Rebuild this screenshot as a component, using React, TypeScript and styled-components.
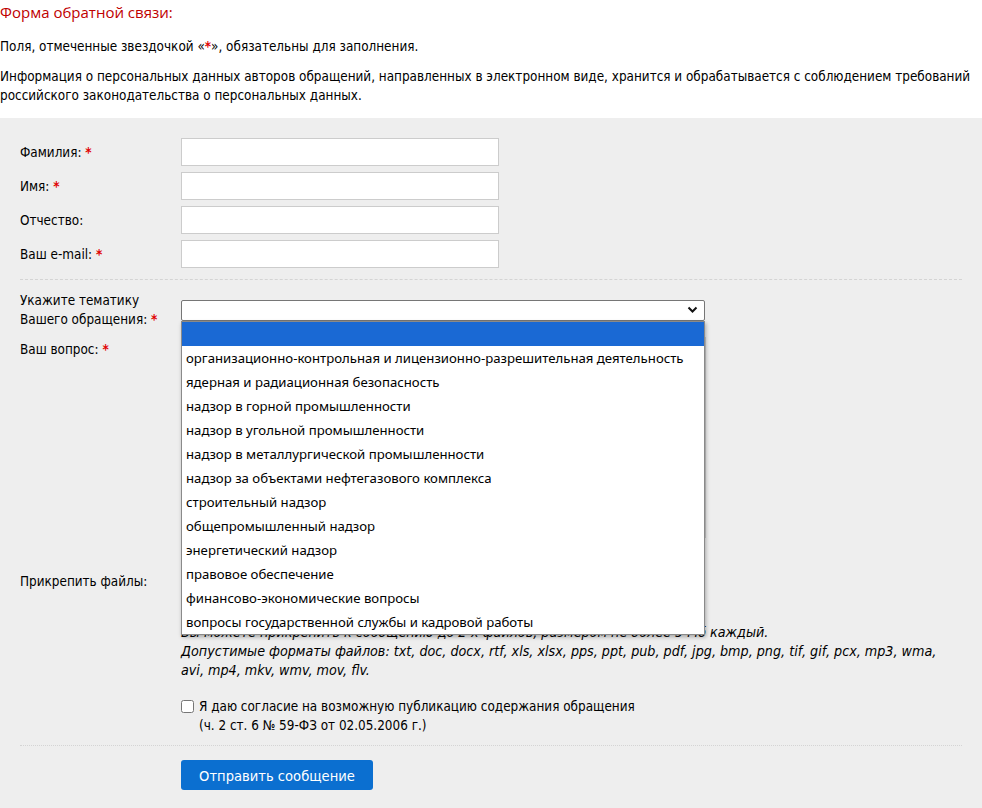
import React from "react";
import styled, { createGlobalStyle } from "styled-components";

const Global = createGlobalStyle`
  html, body { margin: 0; padding: 0; background: #ffffff; }
  body { font-family: "DejaVu Sans Condensed", "DejaVu Sans", sans-serif; color: #000; }
  * { box-sizing: border-box; }
`;

const Page = styled.div`
  width: 982px;
  font-size: 13.4px;
  line-height: 19px;
`;

const Title = styled.h2`
  margin: 0;
  font-family: "Open Sans", "Liberation Sans", sans-serif;
  font-size: 15px;
  line-height: 24px;
  font-weight: normal;
  color: #c00000;
`;

const Para = styled.p<{ $top: number }>`
  margin: ${(p) => p.$top}px 0 0;
`;

const Star = styled.span`
  color: #e00000;
  font-weight: bold;
`;

const Panel = styled.div`
  margin-top: 13px;
  background: #eeeeee;
  padding: 20px 20px 24px 20px;
  display: flex;
  flex-direction: column;
`;

const Row = styled.div<{ $align?: string; $mt?: number }>`
  display: grid;
  grid-template-columns: 161px 1fr;
  align-items: ${(p) => p.$align || "center"};
  margin-top: ${(p) => p.$mt ?? 0}px;
`;

const Label = styled.label<{ $pt?: number }>`
  padding-top: ${(p) => p.$pt ?? 0}px;
`;

const TextInput = styled.input`
  display: block;
  width: 318px;
  height: 28px;
  border: 1px solid #cccccc;
  background: #ffffff;
  margin: 0;
  padding: 0 6px;
  font: inherit;
`;

const Separator = styled.hr<{ $style?: string; $mt: number; $mb: number }>`
  margin: ${(p) => p.$mt}px 0 ${(p) => p.$mb}px;
  border: 0;
  border-top: 1px ${(p) => p.$style || "dashed"} #d4d4d4;
  height: 0;
`;

const SelectWrap = styled.div`
  position: relative;
  width: 524px;
  height: 21px;
`;

const SelectBox = styled.div`
  width: 524px;
  height: 21px;
  background: #ffffff;
  border: 1px solid #767676;
  border-radius: 2px;
`;

const Chevron = styled.svg`
  position: absolute;
  right: 7px;
  top: 6px;
`;

const DropList = styled.ul`
  position: absolute;
  left: 0;
  top: 21px;
  width: 524px;
  margin: 0;
  padding: 0;
  list-style: none;
  background: #ffffff;
  border: 1px solid #8a8a8a;
  box-shadow: 1px 2px 4px rgba(0, 0, 0, 0.3);
  z-index: 5;
  font-family: "Noto Sans", "Open Sans", sans-serif;
  font-weight: normal;
  font-size: 13.2px;
  color: #000;
`;

const Option = styled.li<{ $active?: boolean }>`
  height: 24px;
  line-height: 24px;
  padding-left: 4px;
  white-space: nowrap;
  background: ${(p) => (p.$active ? "#1a69d4" : "transparent")};
  color: ${(p) => (p.$active ? "#fff" : "#000")};
`;

const TextArea = styled.textarea`
  display: block;
  width: 525px;
  height: 201px;
  border: 1px solid #cccccc;
  background: #ffffff;
  margin: 0;
  resize: none;
  font: inherit;
`;

const FileBox = styled.div`
  display: flex;
  flex-direction: column;
`;

const FilePlaceholder = styled.div`
  height: 21px;
  width: 260px;
`;

const Hint = styled.div`
  margin-top: 30px;
  font-style: italic;
  font-size: 14.2px;
`;

const Consent = styled.div`
  display: flex;
  align-items: flex-start;
  gap: 5px;
`;

const Check = styled.input`
  width: 13px;
  height: 13px;
  margin: 3px 0 0 0;
  flex: none;
`;

const Button = styled.button`
  width: 192px;
  height: 30px;
  border: 0;
  border-radius: 3px;
  background: #0b6fd0;
  color: #ffffff;
  font-family: "DejaVu Sans Condensed", "DejaVu Sans", sans-serif;
  font-size: 14.6px;
  padding: 0;
  cursor: pointer;
`;

const options = [
  "",
  "организационно-контрольная и лицензионно-разрешительная деятельность",
  "ядерная и радиационная безопасность",
  "надзор в горной промышленности",
  "надзор в угольной промышленности",
  "надзор в металлургической промышленности",
  "надзор за объектами нефтегазового комплекса",
  "строительный надзор",
  "общепромышленный надзор",
  "энергетический надзор",
  "правовое обеспечение",
  "финансово-экономические вопросы",
  "вопросы государственной службы и кадровой работы",
];

export default function App() {
  return (
    <Page>
      <Global />
      <Title>Форма обратной связи:</Title>
      <Para $top={13}>
        Поля, отмеченные звездочкой «<Star>*</Star>», обязательны для заполнения.
      </Para>
      <Para $top={11}>
        Информация о персональных данных авторов обращений, направленных в электронном виде, хранится и
        обрабатывается с соблюдением требований российского законодательства о персональных данных.
      </Para>
      <Panel>
        <Row>
          <Label>
            Фамилия: <Star>*</Star>
          </Label>
          <TextInput />
        </Row>
        <Row $mt={6}>
          <Label>
            Имя: <Star>*</Star>
          </Label>
          <TextInput />
        </Row>
        <Row $mt={6}>
          <Label>Отчество:</Label>
          <TextInput />
        </Row>
        <Row $mt={6}>
          <Label>
            Ваш e-mail: <Star>*</Star>
          </Label>
          <TextInput />
        </Row>
        <Separator $mt={11} $mb={11} />
        <Row>
          <Label>
            Укажите тематику
            <br />
            Вашего обращения: <Star>*</Star>
          </Label>
          <SelectWrap>
            <SelectBox />
            <Chevron width="11" height="8" viewBox="0 0 11 8">
              <path d="M1.5 1.5 L5.5 5.5 L9.5 1.5" fill="none" stroke="#111" strokeWidth="2" />
            </Chevron>
            <DropList>
              {options.map((o, i) => (
                <Option key={i} $active={i === 0}>
                  {o || "\u00a0"}
                </Option>
              ))}
            </DropList>
          </SelectWrap>
        </Row>
        <Row $align="start" $mt={8}>
          <Label $pt={3}>
            Ваш вопрос: <Star>*</Star>
          </Label>
          <TextArea />
        </Row>
        <Row $align="start" $mt={34}>
          <Label>Прикрепить файлы:</Label>
          <FileBox>
            <FilePlaceholder />
            <Hint>
              Вы можете прикрепить к сообщению до 2-х файлов, размером не более 5 Мб каждый.
              <br />
              Допустимые форматы файлов: txt, doc, docx, rtf, xls, xlsx, pps, ppt, pub, pdf, jpg, bmp, png, tif,
              gif, pcx, mp3, wma,
              <br />
              avi, mp4, mkv, wmv, mov, flv.
            </Hint>
          </FileBox>
        </Row>
        <Row $align="start" $mt={17}>
          <span />
          <Consent>
            <Check type="checkbox" />
            <div>
              Я даю согласие на возможную публикацию содержания обращения
              <br />
              (ч. 2 ст. 6 № 59-ФЗ от 02.05.2006 г.)
            </div>
          </Consent>
        </Row>
        <Separator $style="dotted" $mt={10} $mb={14} />
        <Row>
          <span />
          <div>
            <Button type="button">Отправить сообщение</Button>
          </div>
        </Row>
      </Panel>
    </Page>
  );
}
